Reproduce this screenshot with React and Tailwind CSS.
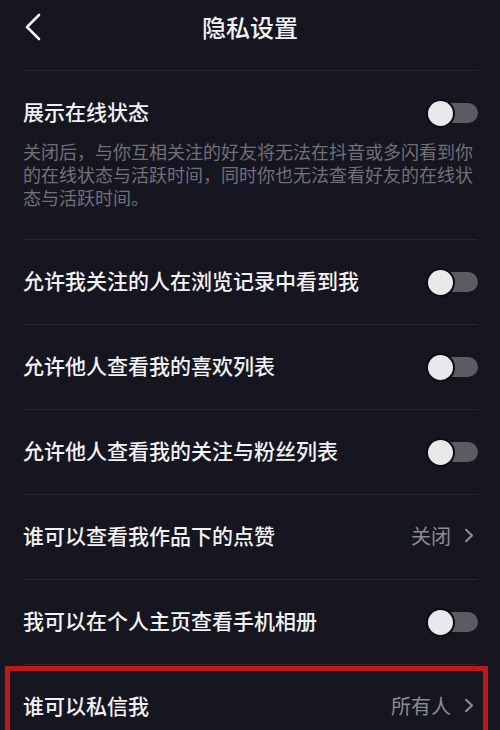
import React from "react";

const font = { fontFamily: '"Noto Sans CJK SC", "Noto Sans", sans-serif' };

function Toggle() {
  return (
    <div className="relative w-[52px] h-[30px] flex items-center shrink-0">
      <div className="absolute right-0 w-[46px] h-[20px] rounded-full bg-[#5b5b62]" />
      <div className="absolute left-0 w-[29px] h-[29px] rounded-full bg-[#e9e9ec] border-[2px] border-[#0c0c12]" />
    </div>
  );
}

function Chevron() {
  return (
    <svg width="10" height="15" viewBox="0 0 10 15" className="shrink-0">
      <path d="M2 1.8 L8 7.5 L2 13.2" fill="none" stroke="#8a8a90" strokeWidth="2.2" strokeLinecap="round" strokeLinejoin="round" />
    </svg>
  );
}

function Divider() {
  return <div className="ml-[23px] mr-[22px] h-px bg-[#272731] shrink-0" />;
}

function Row({ label, value, toggle, children }) {
  return (
    <div className="relative h-[84px] shrink-0 flex items-center justify-between pl-[23px] pr-[22px]">
      <span className="text-[21px] leading-[28px] text-[#f2f2f4] font-medium mb-[4px]">{label}</span>
      {toggle ? (
        <Toggle />
      ) : (
        <div className="flex items-center gap-[13px] pr-[4px] mb-[3px]">
          <span className="text-[20px] leading-[28px] text-[#8a8a90]">{value}</span>
          <Chevron />
        </div>
      )}
      {children}
    </div>
  );
}

export default function App() {
  return (
    <div className="w-[500px] h-[730px] overflow-hidden bg-[#161620] flex flex-col" style={font}>
      <div className="relative h-[70px] shrink-0 flex items-center justify-center">
        <svg width="18" height="28" viewBox="0 0 18 28" className="absolute left-[24px] top-[13px]">
          <path d="M15 2 L3 14 L15 26" fill="none" stroke="#f4f4f6" strokeWidth="2.6" strokeLinecap="round" strokeLinejoin="round" />
        </svg>
        <span className="text-[24px] leading-[32px] text-[#f2f2f4] font-medium -mt-[16px]">隐私设置</span>
      </div>
      <Divider />
      <div className="shrink-0 h-[168px] pl-[23px] pr-[22px] pt-[28px] flex flex-col">
        <div className="flex items-center justify-between h-[28px]">
          <span className="text-[21px] leading-[28px] text-[#f2f2f4] font-medium mb-[4px]">展示在线状态</span>
          <Toggle />
        </div>
        <p className="mt-[13px] text-[18px] leading-[23px] text-[#707078]">
          关闭后，与你互相关注的好友将无法在抖音或多闪看到你的在线状态与活跃时间，同时你也无法查看好友的在线状态与活跃时间。
        </p>
      </div>
      <Divider />
      <Row label="允许我关注的人在浏览记录中看到我" toggle />
      <Divider />
      <Row label="允许他人查看我的喜欢列表" toggle />
      <Divider />
      <Row label="允许他人查看我的关注与粉丝列表" toggle />
      <Divider />
      <Row label="谁可以查看我作品下的点赞" value="关闭" />
      <Divider />
      <Row label="我可以在个人主页查看手机相册" toggle />
      <Divider />
      <Row label="谁可以私信我" value="所有人">
        <div className="absolute top-[1px] left-[5px] right-[12px] h-[110px] border-[5px] border-[#bf171c] pointer-events-none" />
      </Row>
    </div>
  );
}
